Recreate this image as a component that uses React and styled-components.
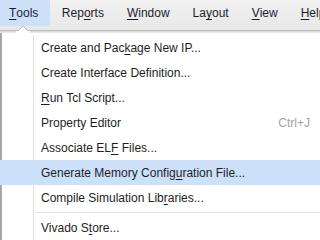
import React from "react";
import styled, { createGlobalStyle } from "styled-components";

const GlobalStyle = createGlobalStyle`
	html, body {
		margin: 0;
		padding: 0;
		width: 320px;
		height: 240px;
		overflow: hidden;
		background: #ffffff;
	}
	body {
		font-family: "Liberation Sans", Arial, sans-serif;
		font-size: 12px;
	}
`;

const Screen = styled.div`
	position: relative;
	width: 320px;
	height: 240px;
	overflow: hidden;
	background: #ffffff;
`;

const MenuBar = styled.nav`
	display: flex;
	align-items: flex-start;
	height: 30px;
	background: linear-gradient(#f1f1f1, #e8e8e8);
	border-bottom: 1px solid #bdbdbd;
`;

const BarItem = styled.div`
	height: 26px;
	display: flex;
	align-items: center;
	padding: 0 ${(p) => (p.$first ? "11px 0 9px" : "11.5px")};
	padding-left: ${(p) => (p.$first ? "9px" : "11.5px")};
	padding-right: ${(p) => (p.$first ? "12px" : "11.5px")};
	color: #1c1c30;
	white-space: nowrap;
	background: ${(p) => (p.$active ? "#cde0f9" : "transparent")};
`;

const Shade = styled.div`
	height: 2px;
	background: linear-gradient(#d6d6d6, #eeeeee);
`;

const Dropdown = styled.div`
	border-left: 2px solid #a6a6a6;
	padding-top: 2px;
	background: #ffffff;
`;

const Row = styled.div`
	display: flex;
	align-items: center;
	height: 25px;
	margin-left: ${(p) => (p.$hot ? "-2px" : "0")};
	padding-left: ${(p) => (p.$hot ? "2px" : "0")};
	background: ${(p) => (p.$hot ? "#cde0f9" : "transparent")};
	color: #1e1e1e;
	white-space: nowrap;
`;

const Gutter = styled.div`
	width: 31px;
	height: 100%;
	flex: none;
	border-right: 1px solid ${(p) => (p.$hot ? "transparent" : "#e0e0e0")};
`;

const Label = styled.span`
	flex: 1;
	padding-left: 7px;
`;

const Shortcut = styled.span`
	color: #a3a3a3;
	padding-right: 10px;
`;

const SepRow = styled.div`
	display: flex;
	height: 5px;
`;

const SepLine = styled.div`
	flex: 1;
	margin: 2px 0 0 2px;
	height: 1px;
	background: #e2e2e2;
`;

const Notch = styled.svg`
	position: absolute;
	left: 16px;
	top: 25px;
`;

const Key = styled.u`
	text-decoration-thickness: 1px;
	text-underline-offset: 2px;
`;

const bar = [
	["", "T", "ools"],
	["Rep", "o", "rts"],
	["", "W", "indow"],
	["La", "y", "out"],
	["", "V", "iew"],
	["", "H", "elp"],
];

const items = [
	{ a: "Create and Pac", k: "k", b: "age New IP..." },
	{ a: "Create Interface Definition...", k: "", b: "" },
	{ a: "", k: "R", b: "un Tcl Script..." },
	{ a: "Property Editor", k: "", b: "", sc: "Ctrl+J" },
	{ a: "Associate EL", k: "F", b: " Files..." },
	{ a: "Generate Memory Config", k: "u", b: "ration File...", hot: true },
	{ a: "Compile Simulation Lib", k: "r", b: "aries..." },
	{ sep: true },
	{ a: "Vivado S", k: "t", b: "ore..." },
];

const App = () => (
	<Screen>
		<GlobalStyle />
		<MenuBar>
			{bar.map(([a, k, b], i) => (
				<BarItem key={i} $first={i === 0} $active={i === 0}>
					{a}
					<Key>{k}</Key>
					{b}
				</BarItem>
			))}
		</MenuBar>
		<Shade />
		<Dropdown>
			{items.map((it, i) =>
				it.sep ? (
					<SepRow key={i}>
						<Gutter />
						<SepLine />
					</SepRow>
				) : (
					<Row key={i} $hot={it.hot}>
						<Gutter $hot={it.hot} />
						<Label>
							{it.a}
							{it.k && <Key>{it.k}</Key>}
							{it.b}
						</Label>
						{it.sc && <Shortcut>{it.sc}</Shortcut>}
					</Row>
				)
			)}
		</Dropdown>
		<Notch width="14" height="8" viewBox="0 0 14 8">
			<polygon points="0,8 7,1 14,8" fill="#ffffff" stroke="#bdbdbd" strokeWidth="1" />
			<rect x="0" y="6" width="14" height="2" fill="#ffffff" />
		</Notch>
	</Screen>
);

export default App;
